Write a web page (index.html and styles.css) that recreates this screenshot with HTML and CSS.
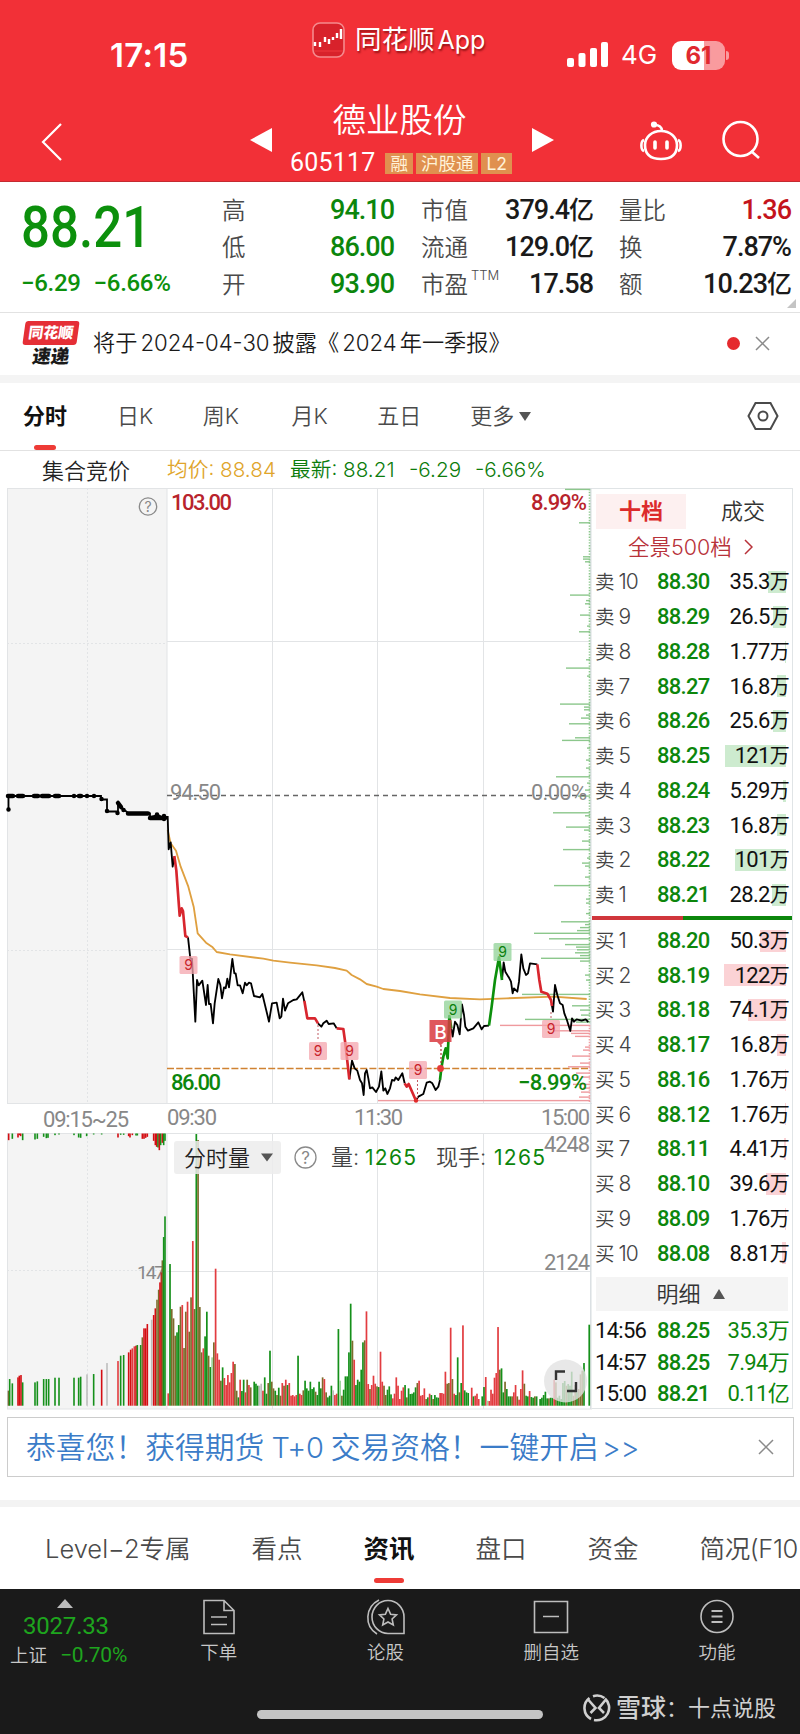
FILE: index.html
```html
<!DOCTYPE html>
<html lang="zh-CN">
<head>
  <meta charset="UTF-8" />
  <meta name="viewport" content="width=800" />
  <title>德业股份 605117</title>
  <link rel="stylesheet" href="styles.css">
</head>
<body>
  <!-- Header -->
  <header class="header">
    <div class="status-bar">
      <div class="time">17:15</div>
      <div class="app-mark">
        <svg width="33" height="36" viewBox="0 0 33 36">
          <rect x="1" y="1" width="31" height="34" rx="7" fill="#d8222b" stroke="#f58a8d" stroke-width="1.6"/>
          <path d="M3 24V20M8 25V20M13 20V15M17 22V17M21 18V15M25 16V11M29 17V7" stroke="#fff" stroke-width="2.4"/>
          <path d="M2 29H31" stroke="#f0383e" stroke-width="1"/>
        </svg>
        <span>同花顺<em>App</em></span>
      </div>
      <div class="status-right">
        <svg width="42" height="26" viewBox="0 0 42 26" fill="#fff">
          <rect x="0" y="16" width="7" height="9" rx="2"/>
          <rect x="11.5" y="11" width="7" height="14" rx="2"/>
          <rect x="23" y="6" width="7" height="19" rx="2"/>
          <rect x="34" y="0" width="7" height="25" rx="2"/>
        </svg>
        <span class="network">4G</span>
        <span class="battery">61</span>
      </div>
    </div>
    <div class="title-bar">
      <svg class="back" width="22" height="40" viewBox="0 0 22 40"><path d="M20 2L2 20L20 38" fill="none" stroke="#fff" stroke-width="2.2"/></svg>
      <svg class="prev" width="22" height="24" viewBox="0 0 22 24"><path d="M22 0V24L0 12Z" fill="#fff"/></svg>
      <div class="stock">
        <h1>德业股份</h1>
        <div class="stock-code">
          <span>605117</span><i>融</i><i>沪股通</i><i class="l2">L2</i>
        </div>
      </div>
      <svg class="next" width="22" height="24" viewBox="0 0 22 24"><path d="M0 0V24L22 12Z" fill="#fff"/></svg>
      <svg class="robot" width="44" height="42" viewBox="0 0 44 42" fill="none" stroke="#fff" stroke-width="2.6">
        <path d="M22 11C31 11 38 17 38 25C38 35 32 39 22 39C12 39 6 35 6 25C6 17 13 11 22 11Z"/>
        <path d="M5 20C1.500 21 1.500 30 5 31M39 20C42.500 21 42.500 30 39 31M23 11C23 7 20 5 16 5"/>
        <circle cx="15" cy="4.500" r="1.800" fill="#fff"/>
        <path d="M16 22V28M28 22V28" stroke-width="3.600" stroke-linecap="round"/>
      </svg>
      <svg class="search" width="39" height="40" viewBox="0 0 39 40" fill="none" stroke="#fff" stroke-width="2.600"><ellipse cx="18.500" cy="19" rx="17" ry="17"/><path d="M29 31L37 38"/></svg>
    </div>
  </header>

  <!-- Quote summary -->
  <section class="quote">
    <div class="price-block">
      <div class="price">88.21</div>
      <div class="change"><span>−6.29</span><span>−6.66%</span></div>
    </div>
    <dl class="facts facts-a">
      <dt>高</dt><dd class="green">94.10</dd>
      <dt>低</dt><dd class="green">86.00</dd>
      <dt>开</dt><dd class="green">93.90</dd>
    </dl>
    <dl class="facts facts-b">
      <dt>市值</dt><dd>379.4<b>亿</b></dd>
      <dt>流通</dt><dd>129.0<b>亿</b></dd>
      <dt>市盈<sup>TTM</sup></dt><dd>17.58</dd>
    </dl>
    <dl class="facts facts-c">
      <dt>量比</dt><dd class="red">1.36</dd>
      <dt>换</dt><dd>7.87%</dd>
      <dt>额</dt><dd>10.23<b>亿</b></dd>
    </dl>
    <span class="corner"></span>
  </section>

  <!-- News line -->
  <section class="news">
    <div class="news-logo"><span class="logo-top">同花顺</span><span class="logo-bottom">速递</span></div>
    <p>将于<span>2024-04-30</span>披露《<span>2024</span>年一季报》</p>
    <i class="dot"></i>
    <svg width="15" height="15" viewBox="0 0 15 15"><path d="M1 1L14 14M14 1L1 14" stroke="#8a8a8a" stroke-width="1.500"/></svg>
  </section>

  <!-- Period tabs -->
  <nav class="periods">
    <a class="active">分时</a><a>日K</a><a>周K</a><a>月K</a><a>五日</a><a>更多<small></small></a>
    <svg width="32" height="30" viewBox="0 0 32 30" fill="none" stroke="#4a4a4a" stroke-width="2"><path d="M8.500 2H23.500L30.500 15L23.500 28H8.500L1.500 15Z"/><circle cx="16" cy="15" r="4.500"/></svg>
  </nav>

  <div class="info-row">
    <span class="auction">集合竞价</span>
    <span class="avg">均价: 88.84</span>
    <span class="last">最新: 88.21</span>
    <span class="diff">-6.29</span>
    <span class="pct">-6.66%</span>
  </div>

  <!-- Charts and order book -->
  <main class="board">
    <svg class="chart" width="592" height="922" viewBox="0 488 592 922">
      <rect x="7" y="488" width="160" height="615" fill="#f4f4f4"/>
      <rect x="7" y="1133" width="160" height="276" fill="#f4f4f4"/>
      <path class="grid" d="M7 488.500H592M167 641.500H591M167 949.500H591M7 1103.500H592M7 1133.500H592M167 1271.500H591M7 1409H592M7.500 488V1103M7.500 1133V1409M167 488V1103M167 1133V1409M272.500 488V1103M272.500 1133V1409M377.500 488V1103M377.500 1133V1409M483.500 488V1103M483.500 1133V1409"/>
      <path class="grid" stroke-dasharray="2 2" d="M87.500 488V1103M87.500 1133V1409M7 643.500H167M7 950.500H167M7 1270.500H167"/>
      <path d="M590.800 488V1409" stroke="#d8dde0" stroke-width="1.400"/>

      <g id="depth"></g>
      <path d="M589.500 489V1024" stroke="#8cc78c" stroke-width="1.600" stroke-dasharray="1.400 1.400"/>
      <path d="M589.500 1025V1103" stroke="#f0a0a4" stroke-width="1.600" stroke-dasharray="1.400 1.400"/>

      <!-- call auction price -->
      <path d="M8.500 810V796H101V799.500H107V811.500H118V803L123 809L129 813.500H150V817L158 815L162 817H167" fill="none" stroke="#000" stroke-width="1.800"/>
      <path d="M8.500 809.500h0M8 796h5M18 796h5M34 796h4M42 796h7M55 796h4M74 796h0M79 796h2M87 796h0M94 796h0M101.500 799h0M107 811h0M117.500 813h0M118 803L121 807M123.500 810h0M128 813.500h20M150 818h15M157 814.500v3M164 816v3" fill="none" stroke="#000" stroke-width="4.500" stroke-linecap="round"/>

      <path d="M167 795.500H590" stroke="#666" stroke-width="1.300" stroke-dasharray="5 4"/>
      <path d="M167 1068.500H590" stroke="#d08232" stroke-width="1.600" stroke-dasharray="7 2.200"/>

      <!-- session lines, drawn at three units per pixel -->
      <g class="lines" transform="translate(150 800) scale(.33333)">
        <path class="avg-line" d="M53 90L62 130L78 152L92 200L115 260L131 320L143 400L168 428L188 442L200 456L240 463L340 476L370 482L420 488L500 496L555 504L590 512L605 525L630 538L650 552L680 560L700 567L750 573L810 583L900 594L990 598L1070 595L1210 590L1310 597"/>
        <path d="M53 48L56 148L62 127L68 200L73 170M114 412L121 476L126 476L136 665L141 540L146 556L157 542L168 615L173 555L177 612L182 612L189 670L194 610L205 537L211 555L216 595L222 562L227 565L232 536L237 562L247 477L253 520L257 520L263 556L270 556L278 580L285 548L290 556L297 548L303 550L312 588L330 592L337 582L357 665L366 610L380 608L389 655L394 650L399 596L405 632L414 610L430 600L440 598L457 577L463 605M504 670L514 680L520 670L530 662L536 672L551 670L560 685M598 838L606 782L614 805L622 812L630 840L636 850L641 885L645 820L650 810L655 835L660 865L667 862L678 876L687 860L694 814L700 872L706 865L712 882L720 865L726 840L733 842L737 832L745 840L748 835L757 820L764 850M798 900L805 890L820 882L830 848L840 845L847 850L857 870L865 860L870 840M904 685L908 710L915 665L922 675L929 703L936 613L942 645L946 680L954 692L970 685L985 667L995 688L1002 678L1017 677M1056 540L1061 487L1066 515L1078 535L1083 545L1088 580L1092 565L1102 575L1107 545L1114 463L1120 505L1128 525L1134 520L1140 490L1162 493M1205 612L1209 635L1215 555L1222 585L1230 610L1238 615L1243 640L1250 658L1261 693L1266 655L1272 665L1280 658L1295 662L1307 658L1315 666"/>
        <path class="down" d="M73 168L79 212L89 347L95 325L99 333L106 408L114 412M463 602L472 655L495 655L504 670M560 685L580 687L586 730L598 838M764 850L770 860L776 852L798 902M1162 493L1168 540L1174 575L1192 581L1203 600L1206 618"/>
        <path class="up" d="M870 840L874 805L880 770L887 745L893 775L898 648L904 685M1017 677L1025 620L1035 540L1047 472L1056 540"/>
      </g>

      <path d="M318 1025V1040M417.500 1080V1098M551 1012V1018" stroke="#c05a62" stroke-width="1" stroke-dasharray="2 2"/>
      <path d="M441 1045V1066" stroke="#a33" stroke-width="1.200" stroke-dasharray="2 2"/>
      <circle cx="440.500" cy="1068.500" r="3.400" fill="#e43a3a"/>
      <circle cx="416" cy="1100.500" r="2.200" fill="#e02a2a"/>

      <g id="marks"></g>
      <path d="M429.500 1020H451.500V1042H444L440.500 1045.500L437 1042H429.500Z" fill="#d93a40" fill-opacity=".85"/>
      <text class="mark-b" x="440.500" y="1038.500">B</text>

      <g class="axis">
        <text class="red" x="171" y="510" textLength="61">103.00</text>
        <text class="red" x="531" y="510" textLength="56">8.99%</text>
        <text x="170" y="800" textLength="51">94.50</text>
        <text x="531" y="800" textLength="56">0.00%</text>
        <text class="green" x="171" y="1090" textLength="50">86.00</text>
        <text class="green" x="518" y="1090" textLength="69">−8.99%</text>
        <text class="thin" x="43" y="1127" textLength="86">09:15~25</text>
        <text class="thin" x="167" y="1125" textLength="50">09:30</text>
        <text class="thin" x="354" y="1125" textLength="49">11:30</text>
        <text class="thin" x="541" y="1125" textLength="49">15:00</text>
        <text class="thin" x="544" y="1152" textLength="46">4248</text>
        <text class="thin" x="544" y="1270" textLength="46">2124</text>
        <text class="thin small" x="137" y="1279" textLength="28">147</text>
      </g>
      <g class="help"><circle cx="148" cy="506.500" r="8.700"/><text x="148" y="511.500">?</text></g>

      <g id="volume"></g>

      <!-- volume legend -->
      <rect x="174" y="1141" width="107" height="33" rx="3" fill="#ececec" fill-opacity=".85"/>
      <g class="legend">
        <text x="184" y="1165.500" textLength="66" fill="#222">分时量</text>
        <path d="M261 1153.500H273L267 1161.500Z" fill="#555"/>
        <text x="331" y="1165" fill="#444">量:</text>
        <text class="green" x="365" y="1165" textLength="51">1265</text>
        <text x="436" y="1165" fill="#444">现手:</text>
        <text class="green" x="494" y="1165" textLength="51">1265</text>
      </g>
      <g class="help big"><circle cx="305.500" cy="1157.500" r="10.500"/><text x="305.500" y="1163.500">?</text></g>

      <circle cx="565.500" cy="1381" r="21.500" fill="#e2e2e2" fill-opacity=".8"/>
      <path d="M556 1380V1371.500H565M567 1391H576V1382" fill="none" stroke="#333" stroke-width="2.400"/>
    </svg>

    <aside class="book">
      <div class="book-tabs"><span class="active">十档</span><span>成交</span></div>
      <div class="book-more">全景500档<svg width="9" height="16" viewBox="0 0 9 16"><path d="M1 1L8 8L1 15" fill="none" stroke="#b8323a" stroke-width="1.500"/></svg></div>
      <div class="levels" id="sell"></div>
      <div class="ratio"><i></i></div>
      <div class="levels" id="buy"></div>
      <div class="detail">明细<i></i></div>
      <div class="trades">
        <span>14:56</span><b>88.25</b><b>35.3万</b>
        <span>14:57</span><b>88.25</b><b>7.94万</b>
        <span>15:00</span><b>88.21</b><b>0.11亿</b>
      </div>
    </aside>
  </main>

  <!-- Promo -->
  <div class="promo">
    <p>恭喜您！获得期货<span>T+0</span>交易资格！一键开启<span class="more">&gt;&gt;</span></p>
    <svg width="16" height="16" viewBox="0 0 16 16"><path d="M1 1L15 15M15 1L1 15" stroke="#8a8a8a" stroke-width="1.500"/></svg>
  </div>

  <nav class="sections">
    <a>Level−2专属</a><a>看点</a><a class="active">资讯</a><a>盘口</a><a>资金</a><a>简况(F10</a>
  </nav>

  <!-- Bottom bar -->
  <footer class="bottom">
    <div class="actions">
      <div class="index">
        <i></i>
        <strong>3027.33</strong>
        <p><span>上证</span><em>−0.70%</em></p>
      </div>
      <div class="action">
        <svg width="34" height="36" viewBox="0 0 34 36"><path d="M2 1.500H22L32 11.500V34.500H2ZM22 1.500V11.500H32M9 18H25M9 25.500H25"/></svg>
        <span>下单</span>
      </div>
      <div class="action">
        <svg width="40" height="36" viewBox="0 0 40 36"><path d="M38 34.500H22A16 16.500 0 1 1 38 18ZM13 1C-1 8-2 27 11 35"/><path d="M22 9.500L24.600 15.200L30.500 15.900L26.100 20L27.300 26L22 23L16.700 26L17.900 20L13.500 15.900L19.400 15.200Z"/></svg>
        <span>论股</span>
      </div>
      <div class="action">
        <svg width="36" height="36" viewBox="0 0 36 36"><path d="M1.500 2.500H34.500V33.500H1.500ZM10 17.500H26"/></svg>
        <span>删自选</span>
      </div>
      <div class="action">
        <svg width="36" height="36" viewBox="0 0 36 36"><circle cx="18" cy="17.500" r="16"/><path d="M12.500 12H23.500M12.500 17.500H23.500M12.500 23H23.500" stroke-width="2"/></svg>
        <span>功能</span>
      </div>
    </div>
    <div class="home-row">
      <i class="home"></i>
      <div class="watermark">
        <svg width="28" height="28" viewBox="0 0 28 28" fill="none" stroke="#d0d0d0" stroke-width="2.600"><path d="M6.500 4A12.500 12.500 0 0 0 8 25M10 2.200A12.500 12.500 0 0 1 21.500 4M22 4.500A12.500 12.500 0 0 1 11 26M5.500 6L12.500 14L7.500 19M22.500 6L16 14L21 19"/></svg>
        <b>雪球</b><span>：十点说股</span>
      </div>
    </div>
  </footer>

  <script src="script.js"></script>
</body>
</html>
```
FILE: styles.css
```css
* {
  margin: 0;
  padding: 0;
  box-sizing: border-box;
}

body {
  width: 800px;
  height: 1734px;
  background: #fff;
  overflow: hidden;
  font-family: 'Inter', 'Noto Sans CJK SC', sans-serif;
  font-weight: 350;
  color: #333;
}

i, em {
  font-style: normal;
}

svg {
  display: block;
  flex: none;
}

.green { color: #0c860c; fill: #0c860c; }
.red { color: #c4141c; fill: #b8232c; }

/* header */
.header {
  height: 182px;
  background: #f23037;
  border-bottom: 1px solid #c42b31;
  color: #fff;
}

.status-bar {
  height: 106px;
  display: flex;
  align-items: flex-start;
}

.time {
  width: 201px;
  margin-left: 110px;
  margin-right: 1px;
  padding-top: 36px;
  font-size: 33px;
  line-height: 38px;
  font-weight: 600;
  letter-spacing: 0.3px;
}

.app-mark {
  width: 255px;
  padding-top: 21px;
  display: flex;
  align-items: center;
  gap: 10px;
  font-size: 26.5px;
  line-height: 36px;
  font-weight: 400;
  text-shadow: 1px 2px 2px rgba(90, 0, 0, 0.6);
}

.app-mark em {
  font-size: 25px;
  margin-left: 3px;
}

.status-right {
  padding-top: 39px;
  display: flex;
  align-items: center;
}

.network {
  flex: none;
  width: 63px;
  padding-left: 12px;
  font-size: 26px;
  line-height: 32px;
  font-weight: 400;
}

.battery {
  position: relative;
  flex: none;
  width: 53px;
  height: 29px;
  border-radius: 9px;
  background: linear-gradient(90deg, #fff 61%, #f99b9e 61%);
  color: #e0282f;
  font-size: 24px;
  line-height: 29px;
  font-weight: 700;
  text-align: center;
}

.battery::after {
  content: "";
  position: absolute;
  left: 54px;
  top: 10px;
  width: 3px;
  height: 9px;
  border-radius: 0 3px 3px 0;
  background: #f99b9e;
}

.title-bar {
  display: flex;
  align-items: flex-start;
}

.back { margin: 16px 0 0 41px; }
.prev { margin: 22px 0 0 187px; }

.stock {
  width: 260px;
  margin-top: -9px;
  display: flex;
  flex-direction: column;
  align-items: center;
}

.stock h1 {
  font-size: 33.5px;
  line-height: 46px;
  font-weight: 350;
  margin-left: -5px;
}

.stock-code {
  display: flex;
  align-items: center;
  gap: 3px;
  margin: 7px 0 0 -2px;
  font: 400 25px/26px 'Roboto', sans-serif;
  letter-spacing: 0.2px;
}

.stock-code span { margin-right: 7px; }

.stock-code i {
  height: 21px;
  padding: 0 5px;
  background: #e0904f;
  color: #fff3d8;
  font: 400 17.5px/21px 'Inter', 'Noto Sans CJK SC', sans-serif;
  letter-spacing: 0;
}

.next { margin: 22px 0 0 0; }
.robot { margin: 14px 0 0 85px; }
.search { margin: 14px 0 0 39px; }

/* quote */
.quote {
  position: relative;
  height: 131px;
  display: flex;
  border-bottom: 1px solid #e2e2e2;
}

.price-block {
  width: 222px;
  padding-left: 21px;
  color: #0c900c;
  font-family: 'Roboto', sans-serif;
}

.price {
  margin-top: 19px;
  font-size: 57px;
  line-height: 54px;
  font-weight: 500;
  transform: scaleX(0.895);
  transform-origin: left;
}

.change {
  display: flex;
  gap: 13px;
  margin-top: 13px;
  font-size: 24px;
  line-height: 30px;
  font-weight: 500;
  letter-spacing: -0.3px;
}

.facts {
  display: grid;
  grid-template-columns: auto auto;
  grid-auto-rows: 37px;
  justify-content: space-between;
  padding-top: 10px;
}

.facts-a { width: 172px; }
.facts-b { width: 172px; margin-left: 27px; }
.facts-c { width: 172px; margin-left: 26px; }

.facts dt {
  font-size: 23.5px;
  line-height: 37px;
  color: #4a4a4a;
}

.facts sup {
  font-size: 13px;
  line-height: 1;
  vertical-align: 13px;
  margin-left: 3px;
}

.facts dd {
  font: 500 27px/37px 'Roboto', 'Noto Sans CJK SC', sans-serif;
  letter-spacing: -1px;
  text-align: right;
}

.facts dd b {
  font-size: 25px;
  font-weight: 500;
}

.facts dd:not(.green):not(.red) { color: #1a1a1a; }

.corner {
  position: absolute;
  right: 4px;
  bottom: 4px;
  border-left: 9px solid transparent;
  border-bottom: 9px solid #c4c4c4;
}

/* news */
.news {
  height: 70px;
  display: flex;
  align-items: center;
  padding: 0 30px 2px 24px;
  border-bottom: 8px solid #f4f4f4;
  color: #1a1a1a;
}

.news-logo {
  width: 54px;
  margin: 2px 15px 0 0;
  font-weight: 900;
  text-align: center;
}

.news-logo span {
  display: block;
  transform: skewX(-8deg);
}

.logo-top {
  background: #e52f36;
  border-radius: 3px;
  color: #fff;
  font-size: 15px;
  line-height: 24px;
}

.logo-bottom {
  font-size: 18.5px;
  line-height: 23px;
}

.news p {
  flex: 1;
  font-size: 22.2px;
  line-height: 32px;
  white-space: nowrap;
}

.news p span { margin: 0 3px; }

.dot {
  width: 13px;
  height: 13px;
  margin-right: 15px;
  border-radius: 50%;
  background: #e52a2e;
}

/* period tabs */
.periods {
  height: 68px;
  display: flex;
  align-items: center;
  padding: 0 21px 2px 23px;
  border-bottom: 1px solid #e2e2e2;
  font-size: 22px;
  line-height: 66px;
  color: #4a4a4a;
}

.periods a { position: relative; margin-right: 49px; white-space: nowrap; }
.periods a:nth-child(1) { margin-right: 50px; }
.periods svg { margin-left: auto; }
.periods a:nth-child(2) { margin-right: 49.5px; }
.periods a:nth-child(3) { margin-right: 52.5px; }
.periods a:nth-child(4) { margin-right: 49.5px; }
.periods a:last-of-type { margin-right: 0; }

.periods a.active,
.sections a.active {
  position: relative;
  color: #111;
  font-weight: 700;
}

.periods a.active::after {
  content: "";
  position: absolute;
  left: 11px;
  bottom: -1px;
  width: 22px;
  height: 5px;
  border-radius: 3px;
  background: #ee3b36;
}

.periods small {
  display: inline-block;
  margin-left: 5px;
  vertical-align: 3px;
  border: 6px solid transparent;
  border-top: 9px solid #555;
  border-bottom: 0;
}

.info-row {
  height: 37px;
  padding-left: 42px;
  display: flex;
  font-size: 20.7px;
  line-height: 38px;
  color: #0c7c0c;
  white-space: nowrap;
}

.auction { width: 125px; font-size: 22px; line-height: 41px; color: #222; }
.avg { width: 123px; color: #e0a52c; }
.last { width: 119px; }
.diff { width: 66px; }

/* chart */
.board { display: flex; }

.grid { fill: none; stroke: #e2e4e6; }

.lines path {
  fill: none;
  stroke: #000;
  stroke-width: 5.5;
  stroke-linejoin: round;
}

.lines .avg-line { stroke: #dfa040; }
.lines .down { stroke: #d8262e; stroke-width: 8; }
.lines .up { stroke: #0c900c; stroke-width: 8; }

.axis text {
  font-family: 'Roboto', sans-serif;
  font-size: 22px;
  font-weight: 500;
}

.axis text:not(.green):not(.red) { fill: #888; font-weight: 400; }
.axis .small { font-size: 19px; }

.help circle { fill: none; stroke: #8a8a8a; stroke-width: 1.3; }
.help text { font-size: 14px; text-anchor: middle; fill: #888; font-weight: 400; }
.help.big text { font-size: 17px; }

.legend { font-size: 22px; font-weight: 350; }
.legend .green { font-size: 21px; font-weight: 400; }

.mark { font-size: 14px; text-anchor: middle; font-weight: 400; }
.mark-b { font-size: 19px; text-anchor: middle; font-weight: 500; fill: #fff; }

/* order book */
.book {
  width: 201px;
  height: 921px;
  border: 1px solid #e0e4e6;
  border-left: 0;
  padding-top: 5px;
}

.book-tabs {
  display: flex;
  padding-left: 4px;
  font-size: 22px;
  line-height: 35px;
  text-align: center;
}

.book-tabs span { width: 90px; margin-right: 12px; }
.book-tabs .active { background: #fdf0f0; color: #dc2b2b; font-weight: 700; }
.book-tabs span:last-child { margin-right: 0; }

.book-more {
  display: flex;
  align-items: center;
  padding-left: 36px;
  gap: 12px;
  height: 36px;
  font-size: 21.5px;
  line-height: 40px;
  color: #b8323a;
}

.level {
  position: relative;
  height: 34.75px;
  display: flex;
  align-items: center;
  line-height: 34px;
}

.level .label {
  width: 66px;
  padding-left: 3px;
  font-size: 19.5px;
  color: #444;
}

.level .label em { margin-left: 4px; font-size: 21px; letter-spacing: -1px; }

.level .cost, .level .amount, .trades {
  font: 400 22px/34px 'Roboto', 'Noto Sans CJK SC', sans-serif;
  letter-spacing: -0.7px;
}

.level .cost { width: 60px; margin-left: -1px; color: #0c860c; font-weight: 500; }
.level .amount { position: relative; width: 72px; text-align: right; color: #111; }
.level .amount em { font-size: 20px; }

/* pending volume behind the amount */
.level .bar {
  position: absolute;
  right: 6px;
  top: 6px;
  height: 22px;
  background: #cdebcf;
}

#buy .bar { background: #fbd2d5; }

.ratio {
  height: 4px;
  margin: 3px 0 4px;
  background: #0c860c;
}

.ratio i { display: block; width: 91px; height: 4px; background: #d0363c; }

.detail {
  height: 34px;
  margin: 6px 4px 4px;
  display: flex;
  align-items: center;
  justify-content: center;
  gap: 12px;
  padding-right: 3px;
  background: #f4f4f4;
  font-size: 22px;
  line-height: 34px;
}

.detail i {
  border: 6.5px solid transparent;
  border-bottom: 10px solid #555;
  border-top: 0;
}

.trades {
  display: grid;
  grid-template-columns: 62px 60px 72px;
  grid-auto-rows: 31.5px;
  padding-left: 3px;
  line-height: 31px;
  color: #111;
}

.trades b { font-weight: 500; color: #0c860c; }
.trades b:nth-child(3n) { font-weight: 400; text-align: right; }

/* promo */
.promo {
  width: 787px;
  height: 60px;
  margin: 7px 0 23px 7px;
  padding: 0 19px 0 18px;
  border: 1px solid #ccc;
  display: flex;
  align-items: center;
  justify-content: space-between;
  color: #3b7cc8;
  font-size: 29.8px;
  line-height: 56px;
  white-space: nowrap;
}

.promo span { margin: 0 7px 0 7px; font-size: 29px; letter-spacing: -0.3px; }
.promo .more { margin: 0 0 0 3px; }

/* section tabs */
.sections {
  height: 89px;
  display: flex;
  gap: 61px;
  padding-left: 45px;
  border-top: 7px solid #f3f3f3;
  font-size: 25.5px;
  line-height: 84px;
  color: #4a4a4a;
  white-space: nowrap;
}

.sections a:last-child { letter-spacing: -0.4px; }

.sections a.active::after {
  content: "";
  position: absolute;
  left: 10px;
  top: 71px;
  width: 30px;
  height: 5px;
  border-radius: 3px;
  background: #ee3b36;
}

/* bottom bar */
.bottom {
  height: 146px;
  background: #1a1a1a;
  color: #c8c8c8;
}

.actions {
  height: 110px;
  display: flex;
}

.index {
  width: 135px;
  padding-top: 10px;
  padding-left: 10px;
}

.index i {
  display: block;
  width: 0;
  margin-left: 47px;
  border: 8.5px solid transparent;
  border-bottom: 9px solid #bbb;
  border-top: 0;
}

.index strong {
  display: block;
  margin: 4px 0 0 13px;
  font: 400 24px/28px 'Roboto', sans-serif;
  letter-spacing: -0.2px;
  color: #1ea51e;
}

.index p {
  display: flex;
  gap: 13px;
  font-size: 18.5px;
  line-height: 31px;
}

.index em {
  font: 400 21px/30px 'Roboto', sans-serif;
  letter-spacing: -0.2px;
  color: #1ea51e;
  white-space: nowrap;
}

.action {
  width: 166px;
  padding-top: 10px;
  display: flex;
  flex-direction: column;
  align-items: center;
  font-size: 18.5px;
  line-height: 34px;
}

.action:nth-child(2) { width: 168px; }

.action svg {
  fill: none;
  stroke: #bdbdbd;
  stroke-width: 1.6;
}

.home-row { display: flex; align-items: flex-start; }

.home {
  width: 286px;
  height: 9px;
  margin: 11px 40px 0 257px;
  border-radius: 5px;
  background: #c4c4c4;
}

.watermark {
  display: flex;
  align-items: center;
  font-size: 22px;
  line-height: 28px;
  margin-top: -5px;
  white-space: nowrap;
  font-weight: 400;
  color: #d0d0d0;
}

.watermark b { margin-left: 5px; font-size: 25px; font-weight: 500; }
```
FILE: script.js
```js
const SVG = 'http://www.w3.org/2000/svg';
const COLORS = { r: '#e23c40', g: '#15901a', b: '#7d6b2b', l: '#9bd69b', x: '#bdbdbd', d: '#d40d12' };

function rect(parent, x, y, w, h, fill) {
  const el = document.createElementNS(SVG, 'rect');
  el.setAttribute('x', x);
  el.setAttribute('y', y);
  el.setAttribute('width', w);
  el.setAttribute('height', h);
  el.setAttribute('fill', fill);
  parent.appendChild(el);
  return el;
}

// order book levels: number, price, amount in units of 10k
function renderLevels(id, name, rows) {
  document.getElementById(id).innerHTML = rows.map(([n, price, amount]) => `
    <div class="level">
      <i class="bar" style="width:${Math.max(1, amount / 122 * 62)}px"></i>
      <span class="label">${name}<em>${n}</em></span>
      <span class="cost">${price}</span>
      <span class="amount">${amount}<em>万</em></span>
    </div>`).join('');
}

renderLevels('sell', '卖', [
  [10, '88.30', '35.3'], [9, '88.29', '26.5'], [8, '88.28', '1.77'], [7, '88.27', '16.8'], [6, '88.26', '25.6'],
  [5, '88.25', '121'], [4, '88.24', '5.29'], [3, '88.23', '16.8'], [2, '88.22', '101'], [1, '88.21', '28.2']
]);
renderLevels('buy', '买', [
  [1, '88.20', '50.3'], [2, '88.19', '122'], [3, '88.18', '74.1'], [4, '88.17', '16.8'], [5, '88.16', '1.76'],
  [6, '88.12', '1.76'], [7, '88.11', '4.41'], [8, '88.10', '39.6'], [9, '88.09', '1.76'], [10, '88.08', '8.81']
]);

// price distribution on the right edge: y, length
const depth = document.getElementById('depth');
const upper = [[489.3,25],[522.7,11],[556.7,7],[559,7],[561.7,5],[595,20],[600.5,4],[603.7,5],[615,10],[626,3],[631.7,11],
  [659.7,4],[668,24],[676,3],[704,30],[707,6],[709.7,6],[715,4],[718,9],[723.7,21],[737.7,15],[740.3,28],[748,3],[760,4],
  [768,4],[776.7,34],[783,3],[790,5],[796,12],[812.7,37],[815.7,5],[827,24],[830,6],[841,8],[849.5,27],[858,3],[863,8],
  [866,5],[877,5],[885.5,36],[899,4],[903,4],[913.5,4],[921.7,29],[924.5,5],[927.5,10],[930.5,13],[933.2,56],[938.7,41],
  [944.5,25],[947,14],[949.7,13],[952.7,15],[955.5,10],[958.2,49],[961,10],[975,5],[980,4],[994.3,68],[1005.7,18],
  [1010,10],[1015,9],[1019.3,65],[1022,14]];
const lower = [[1025.3,90],[1030.7,37],[1033.3,19],[1036.3,15],[1047,5],[1050,7],[1056,18],[1063,10],[1066.7,22],
  [1073,14],[1077,9],[1084.3,17],[1088,7],[1092,9],[1097,11],[1100.5,212]];
upper.forEach(([y, len]) => rect(depth, 590 - len, y - 0.6, len, 1.4, '#8cc78c'));
lower.forEach(([y, len]) => rect(depth, 590 - len, y - 0.6, len, 1.4, '#ef9a9e'));

// nine-count markers
const marks = document.getElementById('marks');
[[179.5,956,'r'],[309,1042,'r'],[340.5,1042,'r'],[409,1061,'r'],[542,1020,'r'],[444,1000.5,'g'],[493.5,943,'g']].forEach(([x, y, c]) => {
  const box = rect(marks, x, y, 18, 18, c === 'r' ? '#f4a6ae' : '#8fd196');
  box.setAttribute('rx', 1.5);
  box.setAttribute('fill-opacity', 0.75);
  const t = document.createElementNS(SVG, 'text');
  t.setAttribute('class', 'mark');
  t.setAttribute('x', x + 9);
  t.setAttribute('y', y + 14);
  t.setAttribute('fill', c === 'r' ? '#c8232b' : '#0c800c');
  t.textContent = '9';
  marks.appendChild(t);
});

// one bar per minute, heights in thirds of a pixel
const minutes = `r37 g425 b290 b262 b210 g220 g242 b297 r302 b173 b282 r312 b222 b325 r494 b290 g815 b797 b296 b160 r172 g208 g282 b150 g116
l145 b190 r411 r157 r138 b75 g115 r83 r62 r92 r70 r98 r132 b125 b45 g25 r78 g44 g78 r40 b78 r62 b55 b0 g72 g66 g60 x60 x66 r45 g85 g36 b68
g165 b72 b52 g45 b32 g54 b30 r68 b60 r78 g62 r68 r30 r32 r28 r32 g150 r36 r32 b46 g75 g52 g45 g72 g50 g55 b42 g32 g72 g52 b85 r80 b40 g25
g30 g60 x46 r32 r36 g230 l75 b30 g48 g88 g88 g160 g306 b195 r138 g62 g78 g72 g108 g190 b196 r283 r65 b50 r62 r90 r66 b58 g56 r162 r72 b60
b32 g48 g58 g34 r22 r36 r85 r60 r20 r45 r55 g62 b25 g52 g35 g36 g40 g55 b68 r75 r30 r32 r52 b20 g25 r36 g32 b20 g32 g25 g24 r38 r38 r36
r102 b66 b68 r234 b80 r36 g32 g145 b40 g68 r241 g46 g40 g38 g0 r54 g28 r30 r36 r20 b0 g28 g56 r86 l15 r14 r48 r36 r84 r98 r236 b108 g112
g40 b72 g50 g28 g28 b28 r40 r62 b28 r18 r50 r106 b66 g30 g28 r44 g26 g24 b28 g28 b0 g20 g24 g32 g42 g22 b22 g24 g24 r78 b70 g24 g30 g20
g68 g74 b60 g65 g60 g102 b30 b62 g40 b50 b94 b105 g128 b0 b0 g243`.trim().split(/\s+/);
const volume = document.getElementById('volume');
const BASE = 1405.7;
const STEP = 421 / (minutes.length - 1);
minutes.forEach((m, i) => {
  const h = m.slice(1) / 3;
  if (h) rect(volume, 167.4 + i * STEP, BASE - h, 1.7, h, COLORS[m[0]]);
});

// call auction: x, height
const auction = `24x45 26b45 29g80 37g67 54d85 58d90 63d92 68g70 105g70 112g73 131g80 139g80 146g80 165g84 177g84 222g84 236g84 242g87 261x94
281g95 305d108 321x128 354r134 362g150 371g152 386d160 392d168 397r172 403r178 408d180 412g182 422g182 427b205 432d232 437d232 442d245
455x258 461d272 466d292 471b318 476b348 480d370 484d400 487b436 491g506 495g568`.split(/\s+/);
auction.forEach(a => {
  const [, x, c, h] = a.match(/(\d+)([a-z])(\d+)/);
  rect(volume, x / 3 - 0.8, BASE - h / 3, 1.6, h / 3, COLORS[c]);
});
const unmatched = `26d20 37g16 54d12 58d5 62d8 68g20 105g18 112g16 131g10 139g14 144g13 165g5 177g3 222g5 236g12 242g13 260g8 281g3 305g3
354d12 362g4 371g4 386d8 390d12 397d5 408g6 412g6 427d16 432d16 437d13 442d10 461d22 466d35 470d40 474g42 478d50 482g35 487d28 491g35 495g22`.split(/\s+/);
unmatched.forEach(a => {
  const [, x, c, h] = a.match(/(\d+)([a-z])(\d+)/);
  rect(volume, x / 3 - 0.8, 1133.5, 1.6, h / 3, COLORS[c]);
});
```
